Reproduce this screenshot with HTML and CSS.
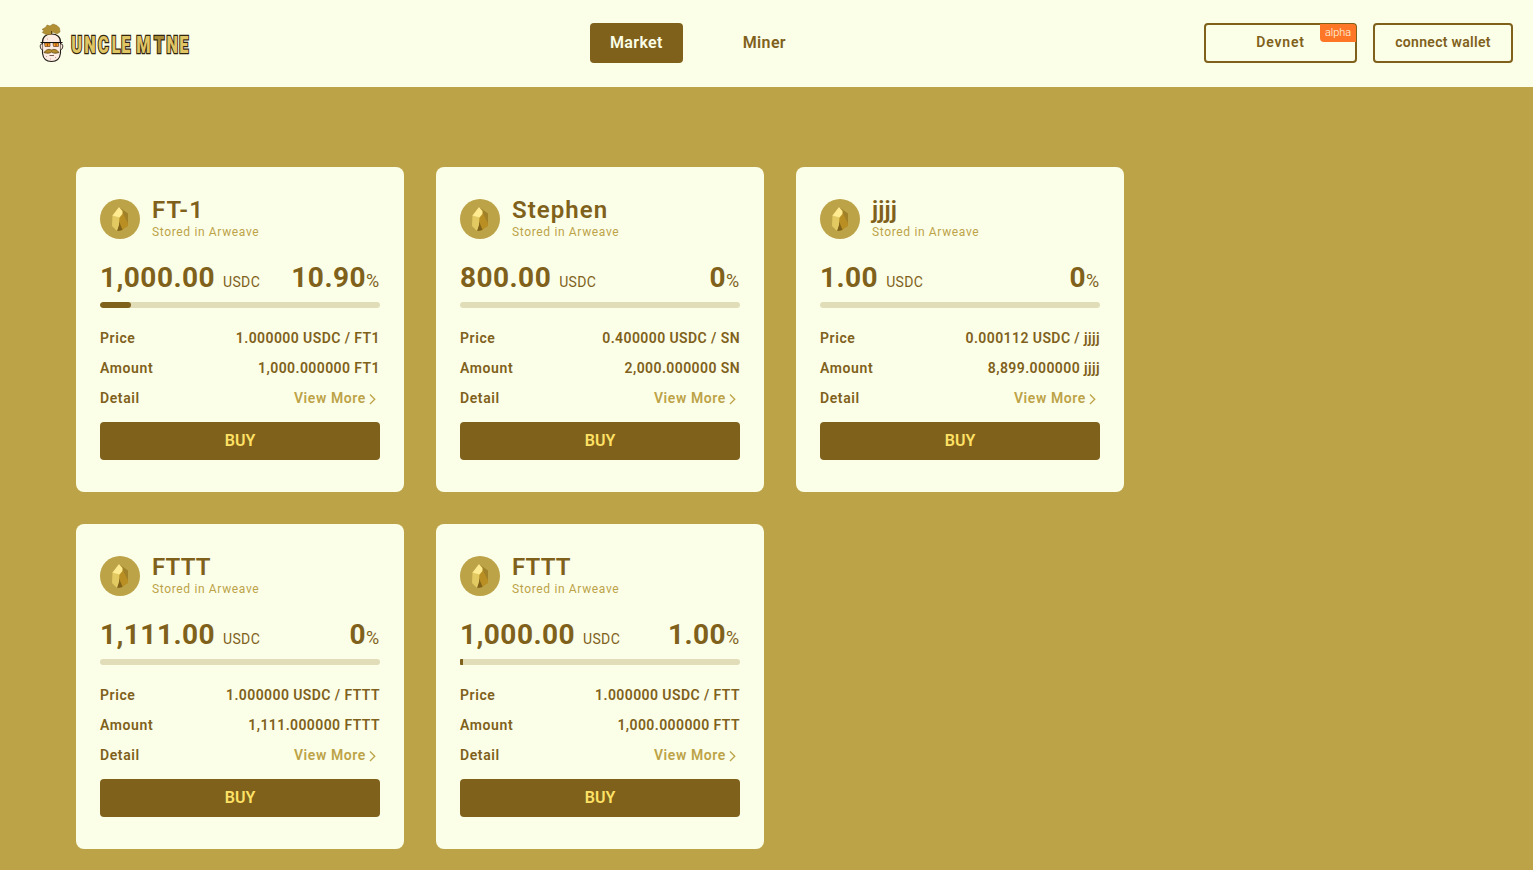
FILE: index.html
```
<!DOCTYPE html>
<html lang="en">
<head>
<meta charset="utf-8">
<title>Uncle Mine - Market</title>
<link rel="stylesheet" href="styles.css">
</head>
<body>
<svg class="sprite" aria-hidden="true">
  <symbol id="gem" viewBox="0 0 40 40">
    <circle cx="20" cy="20" r="20" fill="#bda348"/>
    <path d="M19 8L28 14.5V26L22 31L18 32Z" fill="#a08128"/>
    <path d="M19 18L23 14.500L28 24.500V27L20 32Z" fill="#b98e22"/>
    <path d="M18.500 21L22.500 31L17 32Z" fill="#806119"/>
    <path d="M12.500 16L19.500 18L19 26L17 32L12 27Z" fill="#e2c962"/>
    <path d="M19 8L22.500 12V15L19.500 18.500L12.500 16.500Z" fill="#ffeb91"/>
  </symbol>
  <symbol id="arrow" viewBox="0 0 10 12">
    <path d="M2 1.500L6.800 6.200L2 11" fill="none" stroke="currentColor" stroke-width="1.300"/>
  </symbol>
</svg>
<header class="header">
  <a class="logo">
    <svg width="154" height="42" viewBox="39 22 154 42">
      <path d="M42.500 43C42 37 46 34 51.500 34S61 37 60.500 43V53C60 58 57 61.500 51.500 61.500S43 58 42.500 53Z" fill="#fcece2" stroke="#221c16" stroke-width="1.100"/>
      <path d="M46 34.500L42.300 32.500L44 30.500L42 29.500L46 27L47 25L50 26L53 24L57 25.500L59.500 28L60 32L57 34L53 32L51 34.500Z" fill="#b18f35" stroke="#967930" stroke-width=".6"/>
      <path d="M51.500 31V34" stroke="#4c3b16" stroke-width=".9"/>
      <path d="M42.500 44C39.500 43 39.500 49 42.500 50M60.500 44C63.500 43 63.500 49 60.500 50" fill="#fce4d9" stroke="#221c16" stroke-width="1"/>
      <path d="M40.500 42.500H62.500" stroke="#15120f" stroke-width="1"/>
      <path d="M44.500 43H50V46.500H45ZM53 43H58.500V46.500H53.500Z" fill="#f5a02a" stroke="#25170a" stroke-width=".5"/>
      <path d="M47.500 43.500V46.500M56 43.500V46.500" stroke="#a84b0d" stroke-width="1.200"/>
      <path d="M51.500 50C48 48.500 46 50 44 52.500C47 53.500 50 53.500 51.500 52C53 53.500 56 53.500 59 52.500C57 50 55 48.500 51.500 50Z" fill="#b68c2a" stroke="#5c4310" stroke-width=".8"/>
      <path d="M49.500 55.500H54" stroke="#6c4b3d" stroke-width=".9"/>
      <path d="M46 56.500H47M55 57.500H56M50 59H51M47 39H48" stroke="#d799a0"/>
      <g transform="scale(.68 1)">
        <text class="wordmark" x="104.700 124 144.300 164 178.300" y="53.500">UNCLE</text>
        <text class="wordmark" x="200.300 226.400 245 263.500" y="53.500">M<tspan class="pick">T</tspan>NE</text>
      </g>
    </svg>
  </a>
  <nav class="nav"><a class="tab active">Market</a><a class="tab">Miner</a></nav>
  <div class="actions">
    <button class="outline network">Devnet<span class="badge">alpha</span></button>
    <button class="outline wallet">connect wallet</button>
  </div>
</header>
<main class="cards">
  <article class="card">
    <div class="token"><svg class="gem"><use href="#gem"/></svg><div><h2 class="name">FT-1</h2><p class="stored">Stored in Arweave</p></div></div>
    <div class="totals"><div><b class="num">1,000.00</b><span class="unit">USDC</span></div><div><b class="num">10.90</b><span class="pct">%</span></div></div>
    <div class="bar"><div class="fill" style="width:10.9%"></div></div>
    <div class="row"><span>Price</span><span class="value">1.000000 USDC / FT1</span></div>
    <div class="row"><span>Amount</span><span class="value">1,000.000000 FT1</span></div>
    <div class="row"><span>Detail</span><a class="more">View More<svg class="arrow"><use href="#arrow"/></svg></a></div>
    <button class="buy">BUY</button>
  </article>
  <article class="card">
    <div class="token"><svg class="gem"><use href="#gem"/></svg><div><h2 class="name">Stephen</h2><p class="stored">Stored in Arweave</p></div></div>
    <div class="totals"><div><b class="num">800.00</b><span class="unit">USDC</span></div><div><b class="num">0</b><span class="pct">%</span></div></div>
    <div class="bar"></div>
    <div class="row"><span>Price</span><span class="value">0.400000 USDC / SN</span></div>
    <div class="row"><span>Amount</span><span class="value">2,000.000000 SN</span></div>
    <div class="row"><span>Detail</span><a class="more">View More<svg class="arrow"><use href="#arrow"/></svg></a></div>
    <button class="buy">BUY</button>
  </article>
  <article class="card">
    <div class="token"><svg class="gem"><use href="#gem"/></svg><div><h2 class="name narrow">jjjj</h2><p class="stored">Stored in Arweave</p></div></div>
    <div class="totals"><div><b class="num">1.00</b><span class="unit">USDC</span></div><div><b class="num">0</b><span class="pct">%</span></div></div>
    <div class="bar"></div>
    <div class="row"><span>Price</span><span class="value">0.000112 USDC / jjjj</span></div>
    <div class="row"><span>Amount</span><span class="value">8,899.000000 jjjj</span></div>
    <div class="row"><span>Detail</span><a class="more">View More<svg class="arrow"><use href="#arrow"/></svg></a></div>
    <button class="buy">BUY</button>
  </article>
  <article class="card">
    <div class="token"><svg class="gem"><use href="#gem"/></svg><div><h2 class="name narrow">FTTT</h2><p class="stored">Stored in Arweave</p></div></div>
    <div class="totals"><div><b class="num">1,111.00</b><span class="unit">USDC</span></div><div><b class="num">0</b><span class="pct">%</span></div></div>
    <div class="bar"></div>
    <div class="row"><span>Price</span><span class="value">1.000000 USDC / FTTT</span></div>
    <div class="row"><span>Amount</span><span class="value">1,111.000000 FTTT</span></div>
    <div class="row"><span>Detail</span><a class="more">View More<svg class="arrow"><use href="#arrow"/></svg></a></div>
    <button class="buy">BUY</button>
  </article>
  <article class="card">
    <div class="token"><svg class="gem"><use href="#gem"/></svg><div><h2 class="name narrow">FTTT</h2><p class="stored">Stored in Arweave</p></div></div>
    <div class="totals"><div><b class="num">1,000.00</b><span class="unit">USDC</span></div><div><b class="num">1.00</b><span class="pct">%</span></div></div>
    <div class="bar square"><div class="fill square" style="width:1%"></div></div>
    <div class="row"><span>Price</span><span class="value">1.000000 USDC / FTT</span></div>
    <div class="row"><span>Amount</span><span class="value">1,000.000000 FTT</span></div>
    <div class="row"><span>Detail</span><a class="more">View More<svg class="arrow"><use href="#arrow"/></svg></a></div>
    <button class="buy">BUY</button>
  </article>
</main>
</body>
</html>
```
FILE: styles.css
```
* { box-sizing: border-box; }
body {
  margin: 0;
  height: 870px;
  overflow: hidden;
  background: #bda348;
  color: #80611b;
  font-family: Roboto, "Liberation Sans", sans-serif;
}
h2, p { margin: 0; }
button { font-family: inherit; padding: 0; }
.sprite { display: none; }
.header {
  height: 87px;
  padding: 0 20px 0 39px;
  background: #fbffe8;
  display: grid;
  grid-template-columns: 551px 1fr auto;
  align-items: center;
}
.logo svg { display: block; margin-top: -1px; }
.wordmark {
  font: 900 24px Roboto, sans-serif;
  fill: #e0c564;
  stroke: #30260f;
  stroke-width: 2.6px;
  paint-order: stroke;
}
.pick { fill: #a98a37; }
.nav { display: flex; gap: 40px; padding-bottom: 1px; }
.tab {
  height: 40px;
  padding: 0 20px;
  line-height: 39px;
  border-radius: 4px;
  font-size: 16px;
  font-weight: 600;
  letter-spacing: .35px;
}
.active { background: #80611b; color: #fbffe8; }
.actions { display: flex; gap: 16px; padding-bottom: 1px; }
.outline {
  position: relative;
  height: 40px;
  padding-bottom: 2px;
  border: 2px solid #80611b;
  border-radius: 4px;
  background: transparent;
  color: #80611b;
  font-size: 14px;
  font-weight: 600;
  letter-spacing: .3px;
}
.network { width: 153px; letter-spacing: .8px; }
.wallet { width: 140px; }
.badge {
  position: absolute;
  top: -1px;
  right: -1px;
  width: 36px;
  height: 18px;
  line-height: 17px;
  border-radius: 0 3px 0 4px;
  background: #ff7626;
  color: #fbffe8;
  font-size: 11px;
  font-weight: 300;
  letter-spacing: -.1px;
}
.cards {
  display: grid;
  grid-template-columns: repeat(3, 328px);
  gap: 32px;
  padding: 80px 76px 0;
}
.card {
  height: 325px;
  padding: 32px 24px;
  border-radius: 8px;
  background: #fbffe8;
}
.token { display: flex; gap: 12px; height: 40px; }
.gem { width: 40px; height: 40px; }
.name {
  margin-top: -3px;
  font-size: 24px;
  line-height: 28px;
  font-weight: 600;
  letter-spacing: 1.05px;
}
.narrow { letter-spacing: .15px; }
.stored {
  font-size: 12px;
  line-height: 16px;
  color: #bda348;
  letter-spacing: .65px;
}
.totals {
  display: flex;
  justify-content: space-between;
  height: 63px;
  padding-top: 21px;
  line-height: 36px;
}
.num { font-size: 28px; font-weight: 700; letter-spacing: .45px; }
.unit { margin-left: 8px; font-size: 14px; letter-spacing: .35px; }
.pct { display: inline-block; width: 14px; font-size: 18px; letter-spacing: 0; }
.bar {
  height: 6px;
  margin-bottom: 16px;
  border-radius: 3px;
  overflow: hidden;
  background: #e1ddb9;
}
.fill { height: 100%; border-radius: 3px; background: #80611b; }
.fill.square { border-radius: 0; }
.bar.square { border-radius: 1px 3px 3px 1px; }
.row {
  display: flex;
  justify-content: space-between;
  height: 30px;
  line-height: 29px;
  font-size: 14px;
  font-weight: 600;
  letter-spacing: .6px;
}
.value { letter-spacing: .42px; }
.more {
  display: flex;
  align-items: center;
  height: 29px;
  color: #bda348;
  letter-spacing: .6px;
}
.arrow { width: 10px; height: 12px; margin: 1px 2px 0 2px; }
.buy {
  display: block;
  width: 100%;
  height: 38px;
  margin-top: 8px;
  padding-bottom: 1px;
  border: 0;
  border-radius: 4px;
  background: #80611b;
  color: #ffe265;
  font-size: 16px;
  font-weight: 600;
}
```
